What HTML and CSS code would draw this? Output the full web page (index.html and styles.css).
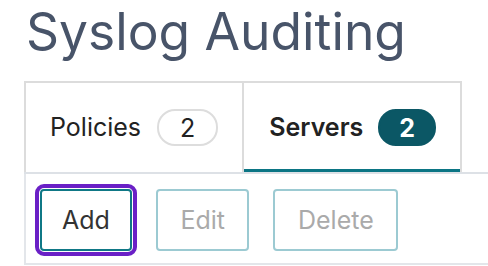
FILE: index.html
```html
<!DOCTYPE html>
<html>
<head>
<meta charset="utf-8">
<link rel="stylesheet" href="styles.css">
</head>
<body>
<h1 class="title">Syslog Auditing</h1>
<div class="tabs">
  <div class="tab">
    <span class="tab-label">Policies</span>
    <span class="badge">2</span>
  </div>
  <div class="tab tab-active">
    <span class="tab-label">Servers</span>
    <span class="badge badge-active">2</span>
  </div>
</div>
<div class="panel">
  <button class="btn btn-focus">Add</button>
  <button class="btn btn-disabled">Edit</button>
  <button class="btn btn-disabled">Delete</button>
</div>
</body>
</html>
```

FILE: styles.css
```css
html, body {
  margin: 0;
  padding: 0;
  background: #ffffff;
}
body {
  font-family: Inter, "Noto Sans", sans-serif;
  width: 488px;
  height: 266px;
  overflow: hidden;
}
.title {
  margin: 0;
  height: 81px;
  padding-left: 26px;
  font-size: 51.5px;
  font-weight: 400;
  line-height: normal;
  color: #485469;
}
.tabs {
  margin-left: 24px;
  display: flex;
  border-bottom: 2px solid #dde1e6;
}
.tab {
  display: flex;
  align-items: center;
  gap: 16px;
  height: 89px;
  padding: 0 24px 0 24px;
  border: 2px solid #dcdcdc;
  border-bottom: none;
  font-size: 25px;
  color: #222222;
}
.tab + .tab {
  border-left: none;
}
.tab-active {
  box-shadow: inset 0 -3px 0 #0b7584;
  font-weight: 600;
  padding-left: 25px;
  gap: 15px;
}
.tab-label {
  line-height: 1;
}
.badge {
  display: inline-flex;
  align-items: center;
  justify-content: center;
  height: 33px;
  padding: 0 21px;
  border: 2px solid #dddddd;
  border-radius: 18px;
  font-size: 25px;
  font-weight: 400;
  color: #222222;
}
.badge-active {
  background: #0b5765;
  border-color: #0b5765;
  color: #ffffff;
  font-weight: 700;
  padding: 0 19px;
}
.panel {
  margin-left: 24px;
  border-left: 2px solid #e3e6ea;
  border-bottom: 2px solid #e3e6ea;
  padding: 15px 14px 12px 14px;
  display: flex;
  gap: 24px;
}
.btn {
  height: 62px;
  padding: 0 20px;
  border: 2px solid #0f7886;
  border-radius: 4px;
  background: #ffffff;
  font-family: Inter, "Noto Sans", sans-serif;
  font-size: 25px;
  color: #333333;
}
.btn-focus {
  outline: 4px solid #6a20c6;
  outline-offset: 1px;
}
.btn-disabled {
  border-color: #9ccad2;
  color: #aaaaaa;
  padding: 0 22.5px;
}
```
